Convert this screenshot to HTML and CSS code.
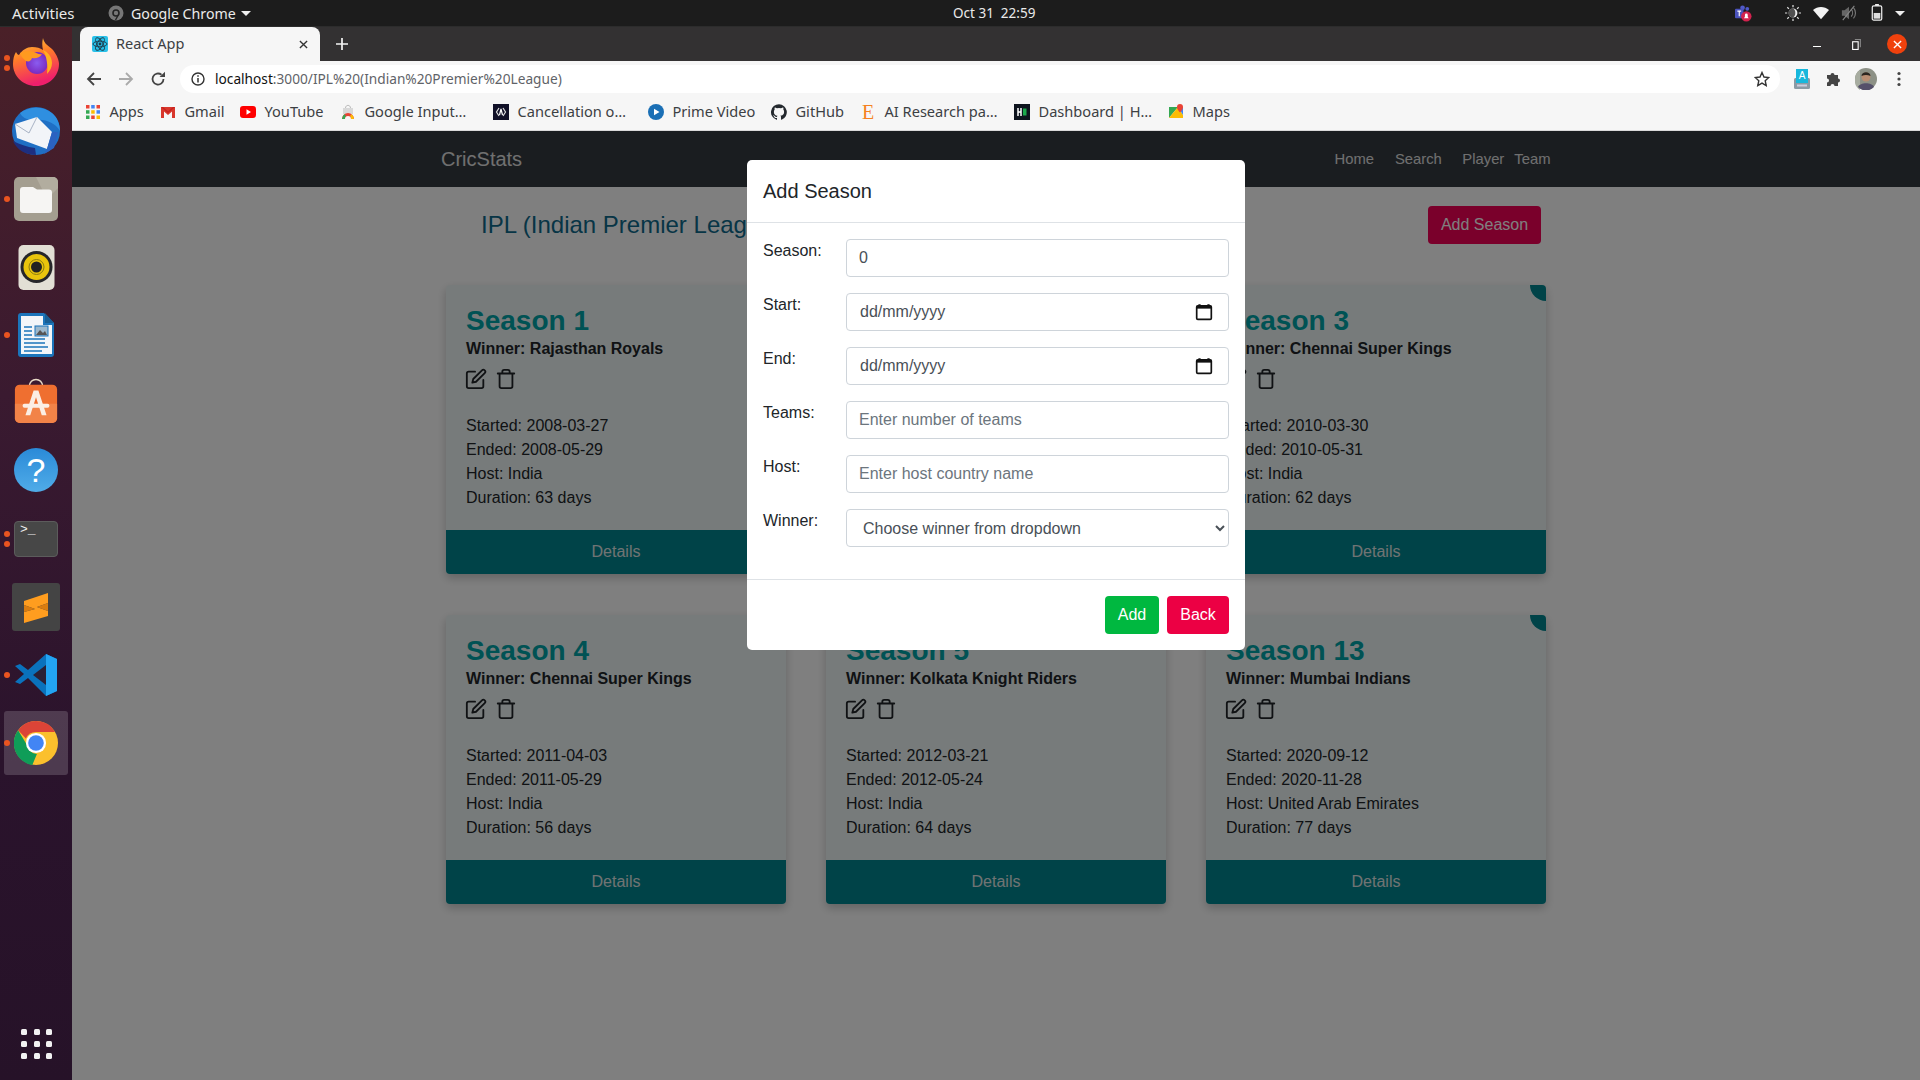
FILE: index.html
```html
<!DOCTYPE html>
<html lang="en">
<head>
<meta charset="utf-8">
<title>React App</title>
<link rel="stylesheet" href="styles.css">
</head>
<body>
<header class="topbar">
  <span class="activities">Activities</span>
  <span class="appmenu">
    <svg class="appicon" viewBox="0 0 16 16"><circle cx="8" cy="8" r="7.5" fill="#777"/><circle cx="8" cy="8" r="3" fill="none" stroke="#222" stroke-width="1.6"/><path d="M10 10.5 7.500 15" stroke="#222" stroke-width="1.4"/></svg>
    Google Chrome
    <i class="caret"></i>
  </span>
  <span class="clock">Oct 31&nbsp;&nbsp;22:59</span>
  <span class="tray">
    <svg class="tray-teams" viewBox="0 0 18 18"><circle cx="8" cy="3" r="2.500" fill="#5059c9"/><circle cx="13" cy="4" r="2" fill="#5059c9"/><rect x="0" y="4" width="9" height="10" rx="1" fill="#4b53bc"/><path d="M2.500 6.500h4M4.500 6.500v5.500" stroke="#fff" stroke-width="1.200"/><circle cx="12" cy="12" r="5.500" fill="#d3224e"/><path d="M9.500 14h5l-1-1.500v-2a1.500 1.500 0 0 0-3 0v2z" fill="#fff"/></svg>
    <svg class="tray-bright" viewBox="0 0 18 18"><circle cx="9" cy="9" r="5" fill="#eee"/><path d="M9 4a5 5 0 0 0 0 10c3-1 4-8 0-10z" fill="#1c1c1c" opacity=".75"/><path d="M9 0v2.500M9 15.500V18M0 9h2.500M15.500 9H18M2.600 2.600l1.800 1.800M13.600 13.600l1.800 1.800M2.600 15.400l1.800-1.800M13.600 4.400l1.800-1.800" stroke="#ddd" stroke-width="1.400"/></svg>
    <svg class="tray-wifi" viewBox="0 0 18 18"><path d="M0 5.500C5 1 13 1 18 5.500L9 16z" fill="#f2f2f2"/></svg>
    <svg class="tray-vol" viewBox="0 0 18 18"><path d="M1 6h3l5-4v14l-5-4H1z" fill="#666"/><path d="M11.500 5a6 6 0 0 1 0 8M14 3a9 9 0 0 1 0 12" stroke="#777" fill="none" stroke-width="1.300"/><path d="M2 17 15 1" stroke="#888" stroke-width="1.200"/></svg>
    <svg class="tray-batt" viewBox="0 0 12 18"><rect x="1" y="2" width="10" height="15" rx="1.500" fill="none" stroke="#eee" stroke-width="1.300"/><rect x="4" y="0" width="4" height="2" fill="#eee"/><rect x="2.500" y="9.500" width="7" height="6" fill="#ddd"/></svg>
    <i class="caret tray-caret"></i>
  </span>
</header>

<div class="desktop">
  <nav class="dock">
    <div class="dock-item">
      <i class="run run-a"></i><i class="run run-b"></i>
      <svg class="dk-ff" viewBox="0 0 46 48">
        <defs>
          <linearGradient id="ffg" x1="0" y1="0" x2="0.3" y2="1"><stop offset="0" stop-color="#ffd43a"/><stop offset=".45" stop-color="#ff7a2a"/><stop offset="1" stop-color="#ef1f6c"/></linearGradient>
          <radialGradient id="ffp" cx=".5" cy=".5" r=".5"><stop offset="0" stop-color="#8a5cf0"/><stop offset="1" stop-color="#7a2bc0"/></radialGradient>
        </defs>
        <path d="M30 0c1 6 6 8 10 12 4 5 6 11 6 14 0 12-10 22-23 22S0 38 0 26c0-5 1-9 3-12 1 2 2 3 3 3C9 12 14 9 19 9c5 0 8 1 11 3-1-4-1-8 0-12z" fill="url(#ffg)"/>
        <circle cx="24" cy="25" r="11" fill="url(#ffp)"/>
        <path d="M7 15c4-2 9-3 14-1 3 1 5 3 8 2-2 4-7 5-10 4-1 3-3 4-6 3-3-2-5-5-6-8z" fill="#ff9a1f"/>
        <path d="M30 12c5 2 9 7 9 13 0 4-2 8-5 11 1-8 0-17-4-24z" fill="#ffb020"/>
      </svg>
    </div>
    <div class="dock-item">
      <svg class="dk-tb" viewBox="0 0 48 48">
        <circle cx="24" cy="24" r="24" fill="#1f6fc4"/>
        <path d="M8 6c8-6 22-8 32 0 6 5 8 12 8 18-5-8-14-12-24-11C15 14 10 10 8 6z" fill="#2f8fe0"/>
        <path d="M24 48C14 48 5 43 1 34c6 3 14 6 22 7z" fill="#1d2f80"/>
        <path d="M3 17 25 10l15 15-5 17L5 31z" fill="#f2f4f8"/>
        <path d="M3 17l14 9 8-16" fill="none" stroke="#a8b2c4" stroke-width="1"/>
        <path d="M40 25l6 0-4 16-10 6 3-5z" fill="#2b62c0"/>
      </svg>
    </div>
    <div class="dock-item">
      <i class="run"></i>
      <svg class="dk-box" viewBox="0 0 44 44"><rect width="44" height="44" rx="5" fill="#a49e90"/><path d="M30 0h9a5 5 0 0 1 5 5v6L33 22 22 0z" fill="#b2ad9f"/><path d="M6 13a3 3 0 0 1 3-3h10l4 2.500h12a3 3 0 0 1 3 3V33a3 3 0 0 1-3 3H9a3 3 0 0 1-3-3z" fill="#f6f5f3"/></svg>
    </div>
    <div class="dock-item">
      <svg class="dk-rb" viewBox="0 0 36 45"><rect width="36" height="45" rx="5" fill="#e2dfd5"/><circle cx="18" cy="22" r="16" fill="#26262a"/><circle cx="18" cy="22" r="13" fill="#e9c40c"/><circle cx="18" cy="22" r="5.500" fill="#222"/><circle cx="18" cy="22" r="7.500" fill="none" stroke="#8a7a12" stroke-width="1"/></svg>
    </div>
    <div class="dock-item">
      <i class="run"></i>
      <svg class="dk-wr" viewBox="0 0 36 44"><path d="M3 0h23l10 10v31a3 3 0 0 1-3 3H3a3 3 0 0 1-3-3V3a3 3 0 0 1 3-3z" fill="#1b75bb"/><path d="M3 3h22v9h9v29H3z" fill="#f2f6f9"/><path d="M27 0l9 10h-9z" fill="#185e93"/><path d="M6 14h8M6 18h8M6 22h8M6 26h21M6 30h21M6 34h24M6 38h18" stroke="#1b75bb" stroke-width="1.500"/><rect x="17" y="13" width="13" height="10" fill="#9bb8cc" stroke="#1b75bb"/><path d="M18 22l4-5 3 3 2-2 2 4z" fill="#555"/></svg>
    </div>
    <div class="dock-item">
      <svg class="dk-sw" viewBox="0 0 44 48"><path d="M15 10c0-10 14-10 14 0" fill="none" stroke="#eadcc8" stroke-width="1.600"/><rect y="8" width="44" height="40" rx="5" fill="#ef6f30"/><path d="M0 28h44v15a5 5 0 0 1-5 5H5a5 5 0 0 1-5-5z" fill="#f28348"/><path d="M19.500 14h5L33 40h-5l-6-19-6 19h-5z" fill="#fbeee4"/><rect x="8" y="28" width="28" height="4" rx="2" fill="#fbeee4"/></svg>
    </div>
    <div class="dock-item">
      <div class="dk-help">?</div>
    </div>
    <div class="dock-item">
      <i class="run run-a"></i><i class="run run-b"></i>
      <div class="dk-term"><span>&gt;_</span></div>
    </div>
    <div class="dock-item">
      <svg class="dk-subl" viewBox="0 0 48 48"><rect width="48" height="48" rx="3" fill="#444"/><path d="M12 18 36 10v10L25 24l11 4v5L12 40V29l11-3-11-4z" fill="#ff9d1f"/><path d="M12 22l11 4-11 3zM25 24l11-4v8z" fill="#d97c10"/></svg>
    </div>
    <div class="dock-item">
      <i class="run"></i>
      <svg class="dk-vs" viewBox="0 0 42 42"><path d="M31 0 42 5v32l-11 5L13 24l-8 6-5-2 9-8-9-8 5-2 8 6z" fill="#0a72bd"/><path d="M31 0 42 5v32l-11 5z" fill="#23a4f2"/><path d="M31 11 18 21l13 10z" fill="#2a2036"/></svg>
    </div>
    <div class="dock-item dock-active">
      <i class="run"></i>
      <svg class="dk-ch" viewBox="0 0 48 48">
        <circle cx="24" cy="24" r="24" fill="#fbc02d"/>
        <path d="M24 0a24 24 0 0 1 20.800 12H24a12 12 0 0 0-11 7L4.500 10A24 24 0 0 1 24 0z" fill="#db4437"/>
        <path d="M4.500 10 14 26a12 12 0 0 0 11 10l-5 12A24 24 0 0 1 4.500 10z" fill="#0f9d58"/>
        <circle cx="24" cy="24" r="11" fill="#fff"/><circle cx="24" cy="24" r="8.500" fill="#4285f4"/>
      </svg>
    </div>
    <div class="dock-apps">
      <i></i><i></i><i></i><i></i><i></i><i></i><i></i><i></i><i></i>
    </div>
  </nav>

  <div class="browser">
    <div class="tabstrip">
      <div class="tab">
        <svg class="favicon" viewBox="0 0 16 16"><rect width="16" height="16" rx="2" fill="#29c0e8"/><g fill="none" stroke="#1e3a4a" stroke-width=".9"><ellipse cx="8" cy="8" rx="7" ry="2.800"/><ellipse cx="8" cy="8" rx="7" ry="2.800" transform="rotate(60 8 8)"/><ellipse cx="8" cy="8" rx="7" ry="2.800" transform="rotate(120 8 8)"/></g><circle cx="8" cy="8" r="1.400" fill="#1e3a4a"/></svg>
        <span class="tab-title">React App</span>
        <svg class="tab-x" viewBox="0 0 10 10"><path d="M1 1l8 8M9 1l-8 8" stroke="#333" stroke-width="1.500"/></svg>
      </div>
      <svg class="newtab" viewBox="0 0 12 12"><path d="M6 0v12M0 6h12" stroke="#f4f4f4" stroke-width="1.700"/></svg>
      <div class="winbtns">
        <i class="win-min"></i>
        <svg class="win-max" viewBox="0 0 8 10"><rect x=".5" y="2.500" width="5" height="7" fill="none" stroke="#fff"/><path d="M2.500 .5h5v7" fill="none" stroke="#888"/></svg>
        <div class="win-close"><svg viewBox="0 0 10 10"><path d="M1 1l8 8M9 1l-8 8" stroke="#fff" stroke-width="1.500"/></svg></div>
      </div>
    </div>

    <div class="toolbar">
      <svg class="nav-ic" viewBox="0 0 16 16"><path d="M15 8H2M8 2 2 8l6 6" fill="none" stroke="#444" stroke-width="1.800"/></svg>
      <svg class="nav-ic" viewBox="0 0 16 16"><path d="M1 8h13M8 2l6 6-6 6" fill="none" stroke="#aaa" stroke-width="1.800"/></svg>
      <svg class="nav-ic" viewBox="0 0 16 16"><path d="M13.500 8A5.500 5.500 0 1 1 11.500 3.800" fill="none" stroke="#444" stroke-width="1.800"/><path d="M9.500 6H15V.8z" fill="#444"/></svg>
      <div class="omni">
        <svg class="omni-info" viewBox="0 0 14 14"><circle cx="7" cy="7" r="6" fill="none" stroke="#333" stroke-width="1.400"/><path d="M7 6v4.500M7 3.200v1.600" stroke="#333" stroke-width="1.500"/></svg>
        <span class="url"><b>localhost</b>:3000/IPL%20(Indian%20Premier%20League)</span>
        <svg class="omni-star" viewBox="0 0 16 16"><path d="M8 1.500l2 4.500 4.800.5-3.600 3.200 1 4.800L8 12.100l-4.200 2.400 1-4.800L1.200 6.500 6 6z" fill="none" stroke="#333" stroke-width="1.400"/></svg>
      </div>
      <svg class="ext-ic" viewBox="0 0 16 20"><rect x="0" y="9" width="16" height="11" rx="1.500" fill="#8a9aa5"/><path d="M2 0h12v14H2z" fill="#17b7dc"/><text x="8" y="10" class="ext-a">A</text><rect x="3" y="15.500" width="10" height="2" fill="#ccd"/></svg>
      <svg class="puzzle" viewBox="0 0 16 16"><path d="M1 5h3.500a2 2 0 1 1 4 0H12v3.500a2 2 0 1 1 0 4V16H8.500a2 2 0 1 0-4 0H1v-3.500a2 2 0 1 0 0-4z" fill="#444" transform="translate(0 -1)"/></svg>
      <svg class="avatar" viewBox="0 0 22 22"><circle cx="11" cy="11" r="11" fill="#8d9186"/><path d="M0 11a11 11 0 0 1 5-9v20A11 11 0 0 1 0 11z" fill="#a7aca0"/><path d="M3 19c2-5 14-5 16 0a11 11 0 0 1-16 0z" fill="#55506a"/><circle cx="11" cy="9" r="4.500" fill="#b98d72"/><path d="M6.500 8c0-5 9-5 9 0-3-1.500-6-1.500-9 0z" fill="#2c2620"/></svg>
      <svg class="kebab" viewBox="0 0 4 16"><circle cx="2" cy="2.500" r="1.600" fill="#444"/><circle cx="2" cy="8" r="1.600" fill="#444"/><circle cx="2" cy="13.500" r="1.600" fill="#444"/></svg>
    </div>

    <div class="bookmarks">
      <a class="bm"><svg viewBox="0 0 16 16" class="bm-ic"><g><rect x="1" y="1" width="3.500" height="3.500" fill="#ea4335"/><rect x="6.200" y="1" width="3.500" height="3.500" fill="#4285f4"/><rect x="11.500" y="1" width="3.500" height="3.500" fill="#ea4335"/><rect x="1" y="6.200" width="3.500" height="3.500" fill="#34a853"/><rect x="6.200" y="6.200" width="3.500" height="3.500" fill="#fbbc05"/><rect x="11.500" y="6.200" width="3.500" height="3.500" fill="#4285f4"/><rect x="1" y="11.500" width="3.500" height="3.500" fill="#34a853"/><rect x="6.200" y="11.500" width="3.500" height="3.500" fill="#ea4335"/><rect x="11.500" y="11.500" width="3.500" height="3.500" fill="#fbbc05"/></g></svg>Apps</a>
      <a class="bm"><svg viewBox="0 0 16 16" class="bm-ic"><path d="M1 3h14v11h-3V7.500L8 11 4 7.500V14H1z" fill="#d8372c"/><path d="M1 3h2l5 4.500L13 3h2L8 9z" fill="#c5221f"/></svg>Gmail</a>
      <a class="bm"><svg viewBox="0 0 16 16" class="bm-ic"><rect y="2" width="16" height="12" rx="3" fill="#f00"/><path d="M6.500 5.300v5.400L11 8z" fill="#fff"/></svg>YouTube</a>
      <a class="bm"><svg viewBox="0 0 16 16" class="bm-ic"><path d="M3 4h10v6H3z" fill="#d8d8d8"/><path d="M5.500 4c0-3.500 5-3.500 5 0" fill="none" stroke="#bbb"/><path d="M2 15a6 6 0 0 1 12 0h-3a3 3 0 0 0-6 0z" fill="#ea4335"/><path d="M2 15a6 6 0 0 1 2.500-4.800L6 12a3 3 0 0 0-1 3z" fill="#34a853"/><path d="M11 15a3 3 0 0 0-1-3l1.500-1.800A6 6 0 0 1 14 15z" fill="#fbbc05"/></svg>Google Input…</a>
      <a class="bm"><svg viewBox="0 0 16 16" class="bm-ic"><rect width="16" height="16" fill="#111128"/><path d="M6 4 3.500 8 6 12M10 4l2.500 4-2.500 4" fill="none" stroke="#ddd" stroke-width="1.200"/><path d="M6.500 11 8 5l1.500 6" fill="none" stroke="#fff" stroke-width="1.200"/></svg>Cancellation o…</a>
      <a class="bm"><svg viewBox="0 0 16 16" class="bm-ic"><circle cx="8" cy="8" r="8" fill="#1a6fb5"/><path d="M6 4.800v6.400L11.500 8z" fill="#fff"/></svg>Prime Video</a>
      <a class="bm"><svg viewBox="0 0 16 16" class="bm-ic"><path d="M8 .2a8 8 0 0 0-2.500 15.600c.4.100.5-.2.500-.4v-1.400c-2.200.5-2.700-1-2.700-1-.4-.9-.9-1.200-.9-1.200-.7-.5.100-.5.100-.5.800.100 1.200.8 1.200.8.700 1.200 1.900.9 2.300.7.100-.5.300-.9.500-1.100-1.800-.2-3.600-.9-3.600-4 0-.9.300-1.600.8-2.100-.1-.2-.4-1 .1-2.100 0 0 .7-.2 2.200.8a7.600 7.600 0 0 1 4 0c1.500-1 2.200-.8 2.200-.8.400 1.100.2 1.900.1 2.100.5.600.8 1.300.8 2.100 0 3.100-1.900 3.700-3.700 3.900.3.300.6.700.6 1.500v2.200c0 .2.100.5.600.4A8 8 0 0 0 8 .2z" fill="#24292e"/></svg>GitHub</a>
      <a class="bm"><span class="bm-e">E</span>AI Research pa…</a>
      <a class="bm"><svg viewBox="0 0 16 16" class="bm-ic"><rect width="16" height="16" fill="#0e141e"/><path d="M4 4v8M7 4v8M4 8h3" stroke="#fff" stroke-width="1.500"/><rect x="9" y="4.500" width="3.500" height="7" fill="#1ba94c"/></svg>Dashboard | H…</a>
      <a class="bm"><svg viewBox="0 0 16 16" class="bm-ic"><path d="M1 3h9l-9 11z" fill="#34a853"/><path d="M1 14l9-11 5 8v3z" fill="#fbbc05"/><path d="M10 3l5 8V3z" fill="#4285f4"/><path d="M12 0a3 3 0 0 1 3 3c0 2.500-3 5.500-3 5.500S9 5.500 9 3a3 3 0 0 1 3-3z" fill="#ea4335"/></svg>Maps</a>
    </div>

    <div class="page">
      <div class="navbar">
        <span class="brand">CricStats</span>
        <span class="navlinks">
          <a class="nl-home">Home</a><a class="nl-search">Search</a><a class="nl-player">Player</a><a>Team</a>
        </span>
      </div>
      <main class="content">
        <div class="title-row">
          <h2 class="league">IPL (Indian Premier League)</h2>
          <button class="btn-add-season">Add Season</button>
        </div>
        <div class="cards">
          <article class="card">
            <div class="card-body">
              <h3>Season 1</h3>
              <p class="winner">Winner: Rajasthan Royals</p>
              <div class="actions">
                <svg viewBox="0 0 24 24"><path d="M11 4H4a2 2 0 0 0-2 2v14a2 2 0 0 0 2 2h14a2 2 0 0 0 2-2v-7"/><path d="M18.500 2.500a2.121 2.121 0 0 1 3 3L12 15l-4 1 1-4 9.500-9.500z"/></svg>
                <svg viewBox="0 0 24 24"><path d="M3 6h18M19 6v14a2 2 0 0 1-2 2H7a2 2 0 0 1-2-2V6m3 0V4a2 2 0 0 1 2-2h4a2 2 0 0 1 2 2v2"/></svg>
              </div>
              <p class="info">Started: 2008-03-27<br>Ended: 2008-05-29<br>Host: India<br>Duration: 63 days</p>
            </div>
            <div class="details">Details</div>
          </article>
          <article class="card">
            <div class="card-body">
              <h3>Season 2</h3>
              <p class="winner">Winner: Deccan Chargers</p>
              <div class="actions">
                <svg viewBox="0 0 24 24"><path d="M11 4H4a2 2 0 0 0-2 2v14a2 2 0 0 0 2 2h14a2 2 0 0 0 2-2v-7"/><path d="M18.500 2.500a2.121 2.121 0 0 1 3 3L12 15l-4 1 1-4 9.500-9.500z"/></svg>
                <svg viewBox="0 0 24 24"><path d="M3 6h18M19 6v14a2 2 0 0 1-2 2H7a2 2 0 0 1-2-2V6m3 0V4a2 2 0 0 1 2-2h4a2 2 0 0 1 2 2v2"/></svg>
              </div>
              <p class="info">Started: 2009-04-18<br>Ended: 2009-05-24<br>Host: South Africa<br>Duration: 36 days</p>
            </div>
            <div class="details">Details</div>
          </article>
          <article class="card corner">
            <div class="card-body">
              <h3>Season 3</h3>
              <p class="winner">Winner: Chennai Super Kings</p>
              <div class="actions">
                <svg viewBox="0 0 24 24"><path d="M11 4H4a2 2 0 0 0-2 2v14a2 2 0 0 0 2 2h14a2 2 0 0 0 2-2v-7"/><path d="M18.500 2.500a2.121 2.121 0 0 1 3 3L12 15l-4 1 1-4 9.500-9.500z"/></svg>
                <svg viewBox="0 0 24 24"><path d="M3 6h18M19 6v14a2 2 0 0 1-2 2H7a2 2 0 0 1-2-2V6m3 0V4a2 2 0 0 1 2-2h4a2 2 0 0 1 2 2v2"/></svg>
              </div>
              <p class="info">Started: 2010-03-30<br>Ended: 2010-05-31<br>Host: India<br>Duration: 62 days</p>
            </div>
            <div class="details">Details</div>
          </article>
          <article class="card">
            <div class="card-body">
              <h3>Season 4</h3>
              <p class="winner">Winner: Chennai Super Kings</p>
              <div class="actions">
                <svg viewBox="0 0 24 24"><path d="M11 4H4a2 2 0 0 0-2 2v14a2 2 0 0 0 2 2h14a2 2 0 0 0 2-2v-7"/><path d="M18.500 2.500a2.121 2.121 0 0 1 3 3L12 15l-4 1 1-4 9.500-9.500z"/></svg>
                <svg viewBox="0 0 24 24"><path d="M3 6h18M19 6v14a2 2 0 0 1-2 2H7a2 2 0 0 1-2-2V6m3 0V4a2 2 0 0 1 2-2h4a2 2 0 0 1 2 2v2"/></svg>
              </div>
              <p class="info">Started: 2011-04-03<br>Ended: 2011-05-29<br>Host: India<br>Duration: 56 days</p>
            </div>
            <div class="details">Details</div>
          </article>
          <article class="card">
            <div class="card-body">
              <h3>Season 5</h3>
              <p class="winner">Winner: Kolkata Knight Riders</p>
              <div class="actions">
                <svg viewBox="0 0 24 24"><path d="M11 4H4a2 2 0 0 0-2 2v14a2 2 0 0 0 2 2h14a2 2 0 0 0 2-2v-7"/><path d="M18.500 2.500a2.121 2.121 0 0 1 3 3L12 15l-4 1 1-4 9.500-9.500z"/></svg>
                <svg viewBox="0 0 24 24"><path d="M3 6h18M19 6v14a2 2 0 0 1-2 2H7a2 2 0 0 1-2-2V6m3 0V4a2 2 0 0 1 2-2h4a2 2 0 0 1 2 2v2"/></svg>
              </div>
              <p class="info">Started: 2012-03-21<br>Ended: 2012-05-24<br>Host: India<br>Duration: 64 days</p>
            </div>
            <div class="details">Details</div>
          </article>
          <article class="card corner">
            <div class="card-body">
              <h3>Season 13</h3>
              <p class="winner">Winner: Mumbai Indians</p>
              <div class="actions">
                <svg viewBox="0 0 24 24"><path d="M11 4H4a2 2 0 0 0-2 2v14a2 2 0 0 0 2 2h14a2 2 0 0 0 2-2v-7"/><path d="M18.500 2.500a2.121 2.121 0 0 1 3 3L12 15l-4 1 1-4 9.500-9.500z"/></svg>
                <svg viewBox="0 0 24 24"><path d="M3 6h18M19 6v14a2 2 0 0 1-2 2H7a2 2 0 0 1-2-2V6m3 0V4a2 2 0 0 1 2-2h4a2 2 0 0 1 2 2v2"/></svg>
              </div>
              <p class="info">Started: 2020-09-12<br>Ended: 2020-11-28<br>Host: United Arab Emirates<br>Duration: 77 days</p>
            </div>
            <div class="details">Details</div>
          </article>
        </div>
      </main>

      <div class="backdrop">
        <section class="modal">
          <div class="modal-head">Add Season</div>
          <form class="modal-body">
            <label class="field"><span>Season:</span><input class="ctl" type="text" value="0"></label>
            <label class="field"><span>Start:</span>
              <div class="ctl date"><span>dd/mm/yyyy</span><svg viewBox="0 0 16 16"><path d="M3 1h2v2H3zM11 1h2v2h-2z" fill="#111"/><rect x="1.500" y="2.500" width="13" height="12" rx="1" fill="none" stroke="#111" stroke-width="1.500"/><rect x="1.500" y="2.500" width="13" height="2.500" fill="#111"/></svg></div>
            </label>
            <label class="field"><span>End:</span>
              <div class="ctl date"><span>dd/mm/yyyy</span><svg viewBox="0 0 16 16"><path d="M3 1h2v2H3zM11 1h2v2h-2z" fill="#111"/><rect x="1.500" y="2.500" width="13" height="12" rx="1" fill="none" stroke="#111" stroke-width="1.500"/><rect x="1.500" y="2.500" width="13" height="2.500" fill="#111"/></svg></div>
            </label>
            <label class="field"><span>Teams:</span><input class="ctl" type="text" placeholder="Enter number of teams"></label>
            <label class="field"><span>Host:</span><input class="ctl" type="text" placeholder="Enter host country name"></label>
            <label class="field"><span>Winner:</span><select class="ctl sel"><option>Choose winner from dropdown</option></select></label>
          </form>
          <div class="modal-foot">
            <button class="btn btn-green">Add</button>
            <button class="btn btn-red">Back</button>
          </div>
        </section>
      </div>
    </div>
  </div>
</div>
</body>
</html>
```

FILE: styles.css
```css
* { box-sizing: border-box; }
html, body { margin: 0; height: 100%; overflow: hidden; }
body { display: flex; flex-direction: column; width: 1920px; height: 1080px; font-family: "Liberation Sans", Arial, sans-serif; font-size: 16px; color: #212529; background: #1c1c1c; }

/* Ubuntu top bar */
.topbar { height: 27px; flex: none; background: #1c1c1c; border-bottom: 1px solid #2c2c2c; color: #eaeaea; font-family: "Noto Sans", sans-serif; font-size: 14.200px; display: flex; align-items: center; position: relative; padding-left: 12px; }
.activities { width: 96px; font-size: 15px; }
.appmenu { display: flex; align-items: center; }
.appicon { width: 16px; height: 16px; margin: 0 7px 0 0; }
.caret { display: inline-block; width: 0; height: 0; border-left: 5px solid transparent; border-right: 5px solid transparent; border-top: 5px solid #eee; margin-left: 5px; }
.clock { position: absolute; left: 953px; top: 3px; font-size: 13.500px; line-height: 20px; }
.tray { position: absolute; left: 0; top: 0; width: 100%; height: 26px; }
.tray svg, .tray .tray-caret { position: absolute; }
.tray-teams { left: 1735px; top: 5px; width: 17px; height: 17px; }
.tray-bright { left: 1785px; top: 5px; width: 16px; height: 16px; }
.tray-wifi { left: 1813px; top: 5px; width: 16px; height: 16px; }
.tray-vol { left: 1841px; top: 5px; width: 16px; height: 16px; }
.tray-batt { left: 1871px; top: 4px; width: 12px; height: 17px; }
.tray .tray-caret { left: 1895px; top: 11px; margin: 0; }

/* Desktop */
.desktop { flex: 1; display: flex; min-height: 0; }
.dock { width: 72px; flex: none; display: flex; flex-direction: column; background: linear-gradient(180deg, #4a2028 0%, #3a1a30 35%, #2a132c 70%, #261228 100%); padding-top: 2px; }
.dock-item { height: 68px; flex: none; position: relative; display: flex; align-items: center; justify-content: center; }
.dock-active::before { content: ""; position: absolute; left: 4px; right: 4px; top: 2px; bottom: 2px; background: rgba(255,255,255,.17); border-radius: 3px; }
.dock-item svg, .dock-item div { position: relative; }
.run { position: absolute; left: 4px; top: 31px; width: 6px; height: 6px; border-radius: 50%; background: #e95420; }
.run-a { top: 26px; }
.run-b { top: 36px; }
.dk-ff { width: 46px; height: 48px; margin-top: -3px; }
.dk-tb { width: 48px; height: 48px; margin-top: -1px; }
.dk-box { width: 44px; height: 44px; margin-top: -1px; }
.dk-rb { width: 37px; height: 45px; }
.dk-wr { width: 36px; height: 44px; }
.dk-sw { width: 44px; height: 46px; margin-top: -6px; }
.dk-help { width: 44px; height: 44px; border-radius: 50%; background: linear-gradient(#2a8ad8, #50ace8); color: #fff; font-size: 34px; line-height: 44px; text-align: center; margin-top: -2px; }
.dk-term { width: 44px; height: 36px; background: #474747; border-radius: 4px; border: 1px solid #5c5c5c; color: #eee; font-family: "Liberation Mono", monospace; font-size: 13px; line-height: 12px; padding: 2px 0 0 5px; }
.dk-subl { width: 48px; height: 48px; margin-top: -1px; }
.dk-vs { width: 42px; height: 42px; }
.dk-ch { width: 44px; height: 44px; }
.dock-apps { margin-top: auto; margin-bottom: 21px; margin-left: 21px; width: 31px; display: grid; grid-template-columns: repeat(3, 6px); gap: 6px 6.500px; }
.dock-apps i { height: 6px; background: #f2f2f2; border-radius: 1.500px; }

/* Browser chrome */
.browser { flex: 1; min-width: 0; display: flex; flex-direction: column; background: #fff; }
.tabstrip { height: 34px; flex: none; background: #333132; display: flex; align-items: stretch; padding-left: 8px; position: relative; }
.tab { width: 240px; background: #f6f6f6; border-radius: 8px 8px 0 0; display: flex; align-items: center; padding: 0 12px; font-family: "Noto Sans", sans-serif; font-size: 14.500px; color: #3c4043; }
.favicon { width: 16px; height: 16px; margin-right: 8px; flex: none; }
.tab-title { flex: 1; margin-top: -2px; }
.tab-x { width: 9px; height: 9px; margin-right: 0; }
.newtab { width: 12px; height: 12px; margin: 11px 0 0 16px; }
.winbtns { margin-left: auto; display: flex; align-items: center; }
.win-min { width: 8px; height: 1.500px; background: #fff; margin: 5px 31px 0 0; }
.win-max { width: 9px; height: 11px; margin-right: 26px; }
.win-close { width: 20px; height: 20px; border-radius: 50%; background: #f0410d; margin-right: 13px; display: flex; align-items: center; justify-content: center; }
.win-close svg { width: 9px; height: 9px; }

.toolbar { height: 32px; flex: none; background: #f6f6f6; display: flex; align-items: flex-end; padding-left: 14px; }
.nav-ic { width: 16px; height: 16px; margin: 0 16px 6px 0; flex: none; }
.omni { width: 1600px; height: 28px; margin-left: -2px; background: #fff; border-radius: 14px; display: flex; align-items: center; padding: 0 10px 0 11px; flex: none; }
.omni-info { width: 14px; height: 14px; flex: none; margin-right: 10px; }
.url { flex: 1; font-family: "Noto Sans", sans-serif; font-size: 13.700px; line-height: 18px; margin-top: -1px; color: #5f6368; white-space: nowrap; }
.url b { font-weight: 400; color: #111; }
.omni-star { width: 16px; height: 16px; }
.ext-ic { width: 16px; height: 20px; margin: 0 0 4px 14px; }
.ext-a { font-size: 10px; fill: #fff; text-anchor: middle; font-family: "Liberation Sans", sans-serif; }
.puzzle { width: 16px; height: 16px; margin: 0 0 6px 16px; }
.avatar { width: 22px; height: 22px; margin: 0 0 3px 13px; }
.kebab { width: 4px; height: 16px; margin: 0 0 6px 20px; }

.bookmarks { height: 38px; flex: none; background: #f6f6f6; border-bottom: 1px solid #d9d9d9; display: grid; grid-template-columns: 75px 80px 100px 153px 155px 123px 89px 154px 154px 80px; align-items: center; padding-left: 13px; font-family: "Noto Sans", sans-serif; font-size: 14.600px; line-height: 20px; color: #3c4043; }
.bm { display: flex; align-items: center; white-space: nowrap; margin-top: -2px; }
.bm-ic { width: 16px; height: 16px; margin: 2px 8.500px 0 0; flex: none; }
.bm-e { width: 16px; margin: 2px 8.500px 0 0; text-align: center; font-family: "Liberation Serif", serif; font-size: 20px; line-height: 20px; color: #f58220; }

/* Page */
.page { flex: 1; min-height: 0; position: relative; background: #fff; display: flex; flex-direction: column; }
.navbar { height: 56px; flex: none; background: #343a40; display: flex; align-items: center; justify-content: space-between; padding: 0 369.500px 0 369px; }
.brand { font-size: 20px; color: #e0e0e0; }
.navlinks { display: flex; color: #e0e0e0; font-size: 14.800px; }
.nl-home { margin-right: 21px; }
.nl-search { margin-right: 20.500px; }
.nl-player { margin-right: 10px; }
.content { flex: 1; }
.title-row { display: flex; align-items: flex-start; justify-content: space-between; padding: 19px 379px 0 409px; height: 98px; }
.league { margin: 4px 0 0; font-size: 24px; font-weight: 400; line-height: 29px; color: #0e6a8c; }
.btn-add-season { width: 113px; height: 38px; border: 0; border-radius: 4px; background: #f50057; color: #fff; font: 16px "Liberation Sans", Arial, sans-serif; padding: 0; }
.cards { display: grid; grid-template-columns: repeat(3, 340px); gap: 41px 40px; justify-content: center; }
.card { height: 289px; background: #eff7f7; border-radius: 4px; box-shadow: 0 4px 10px rgba(0,0,0,.22); display: flex; flex-direction: column; position: relative; overflow: hidden; }
.corner::after { content: ""; position: absolute; right: 0; top: 0; width: 16px; height: 16px; background: #008690; border-radius: 0 0 0 16px; }
.card-body { flex: 1; padding: 20px 20px 0; }
.card h3 { margin: 0; font-size: 28px; line-height: 32px; font-weight: 700; color: #00a4a8; }
.winner { margin: 0; font-weight: 700; line-height: 23px; }
.actions { display: flex; gap: 8px; margin: 8px 0 0 -1px; height: 22px; }
.actions svg { width: 22px; height: 22px; fill: none; stroke: #212529; stroke-width: 2; stroke-linecap: round; stroke-linejoin: round; }
.info { margin: 24px 0 0; line-height: 24px; }
.details { height: 44px; flex: none; background: #008690; color: #e0e8e8; text-align: center; line-height: 44px; }

/* Modal */
.backdrop { position: absolute; inset: 0; background: rgba(0,0,0,.5); display: flex; justify-content: center; align-items: flex-start; }
.modal { width: 498px; height: 490px; margin-top: 29px; background: #fff; border-radius: 5px; display: flex; flex-direction: column; }
.modal-head { height: 63px; flex: none; border-bottom: 1px solid #dee2e6; padding: 16px; font-size: 20px; line-height: 30px; }
.modal-body { flex: 1; padding: 16px 16px 0; display: flex; flex-direction: column; gap: 16px; }
.field { display: flex; height: 38px; align-items: flex-start; line-height: 24px; }
.field > span { width: 83px; flex: none; margin-top: 0; }
.ctl { width: 383px; height: 38px; border: 1px solid #ced4da; border-radius: 4px; background: #fff; padding: 6px 12px; font: 16px/24px "Liberation Sans", Arial, sans-serif; color: #495057; outline: 0; }
.ctl::placeholder { color: #6c757d; opacity: 1; }
.date { display: flex; align-items: center; justify-content: space-between; padding: 6px 15px 6px 13px; }
.date svg { width: 18px; height: 18px; }
.modal-foot { height: 71px; flex: none; border-top: 1px solid #dee2e6; display: flex; justify-content: flex-end; align-items: flex-start; gap: 8px; padding: 16px; }
.btn { height: 38px; border: 0; border-radius: 4px; color: #fff; font: 16px "Liberation Sans", Arial, sans-serif; padding: 0; }
.btn-green { width: 54px; background: #00b840; }
.btn-red { width: 62px; background: #ec0044; }
```
